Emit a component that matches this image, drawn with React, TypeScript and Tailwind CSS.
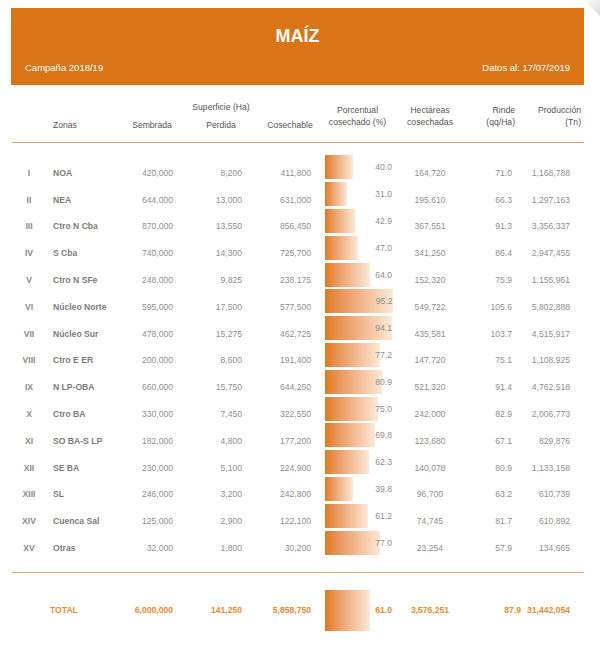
const filas = [
  ["I", "NOA", "420,000", "8,200", "411,800", 40.0, "164,720", "71.0", "1,168,788"],
  ["II", "NEA", "644,000", "13,000", "631,000", 31.0, "195,610", "66.3", "1,297,163"],
  ["III", "Ctro N Cba", "870,000", "13,550", "856,450", 42.9, "367,551", "91.3", "3,356,337"],
  ["IV", "S Cba", "740,000", "14,300", "725,700", 47.0, "341,250", "86.4", "2,947,455"],
  ["V", "Ctro N SFe", "248,000", "9,825", "238,175", 64.0, "152,320", "75.9", "1,155,961"],
  ["VI", "Núcleo Norte", "595,000", "17,500", "577,500", 95.2, "549,722", "105.6", "5,802,888"],
  ["VII", "Núcleo Sur", "478,000", "15,275", "462,725", 94.1, "435,581", "103.7", "4,515,917"],
  ["VIII", "Ctro E ER", "200,000", "8,600", "191,400", 77.2, "147,720", "75.1", "1,108,925"],
  ["IX", "N LP-OBA", "660,000", "15,750", "644,250", 80.9, "521,320", "91.4", "4,762,518"],
  ["X", "Ctro BA", "330,000", "7,450", "322,550", 75.0, "242,000", "82.9", "2,006,773"],
  ["XI", "SO BA-S LP", "182,000", "4,800", "177,200", 69.8, "123,680", "67.1", "829,876"],
  ["XII", "SE BA", "230,000", "5,100", "224,900", 62.3, "140,078", "80.9", "1,133,158"],
  ["XIII", "SL", "246,000", "3,200", "242,800", 39.8, "96,700", "63.2", "610,739"],
  ["XIV", "Cuenca Sal", "125,000", "2,900", "122,100", 61.2, "74,745", "81.7", "610,892"],
  ["XV", "Otras", "32,000", "1,800", "30,200", 77.0, "23,254", "57.9", "134,665"],
] as const;

const columnas = "grid grid-cols-[34px_72px_55px_69px_69px_84px_70px_47px_58px]";

function Barra({ pct, alto }: { pct: number; alto: string }) {
  return (
    <div
      className={`${alto} bg-linear-to-r from-[#e07a1c] to-[#fbe9d8]`}
      style={{ width: `${pct * 0.71}px` }}
    />
  );
}

export default function App() {
  return (
    <div className="relative h-[646px] w-[600px] bg-white pt-[8px] font-['Liberation_Sans',Arial,sans-serif] overflow-hidden">
      <div className="ml-[11px] h-[77px] w-[573px] bg-[#db7416] pt-[18px] text-white">
        <h1 className="text-center text-[18px] font-bold leading-[20px]">MAÍZ</h1>
        <div className="mt-[16px] flex justify-between px-[14px] text-[9.5px] leading-[12px]">
          <span>Campaña 2018/19</span>
          <span>Datos al: 17/07/2019</span>
        </div>
      </div>

      <div className="ml-[12px] w-[572px]">
        {/* encabezado */}
        <div className="mt-[15px] grid grid-cols-[34px_72px_68px_70px_68px_67px_78px_46px_66px] items-start text-[8.6px] leading-[12px] text-[#555]">
          <div />
          <div className="pl-[7px] pt-[19px]">Zonas</div>
          <div className="pt-[19px] text-center">Sembrada</div>
          <div className="pt-[1px] text-center">
            <div className="whitespace-nowrap">Superficie (Ha)</div>
            <div className="mt-[6px]">Perdida</div>
          </div>
          <div className="pt-[19px] text-center">Cosechable</div>
          <div className="pt-[4px] text-center whitespace-nowrap">
            <div>Porcentual</div>
            <div>cosechado (%)</div>
          </div>
          <div className="pt-[4px] text-center">
            <div>Hectáreas</div>
            <div>cosechadas</div>
          </div>
          <div className="pt-[4px] text-right">
            <div>Rinde</div>
            <div>(qq/Ha)</div>
          </div>
          <div className="pt-[4px] text-right">
            <div>Producción</div>
            <div>(Tn)</div>
          </div>
        </div>

        <div className="mt-[11px] h-px bg-[#e7a267]" />

        {/* filas */}
        <div className="mt-[11px] text-[8.6px] leading-[10px] text-[#8f8f8f]">
          {filas.map((f) => (
            <div key={f[0]} className={`${columnas} h-[26.8px] items-center`}>
              <div className="pt-[11px] text-center font-bold text-[#8a8a8a]">{f[0]}</div>
              <div className="pl-[7px] pt-[11px] font-bold text-[#7c7c7c] whitespace-nowrap">{f[1]}</div>
              <div className="pt-[11px] text-right">{f[2]}</div>
              <div className="pt-[11px] text-right">{f[3]}</div>
              <div className="pt-[11px] text-right">{f[4]}</div>
              <div className="grid items-center pl-[14px] pr-[3px]">
                <div className="col-start-1 row-start-1 justify-self-start">
                  <Barra pct={f[5]} alto="h-[24px]" />
                </div>
                <span className="col-start-1 row-start-1 justify-self-end">{f[5].toFixed(1)}</span>
              </div>
              <div className="pt-[11px] text-center">{f[6]}</div>
              <div className="pt-[11px] text-right">{f[7]}</div>
              <div className="pt-[11px] text-right">{f[8]}</div>
            </div>
          ))}
        </div>

        <div className="mt-[16px] h-px bg-[#e7a267]" />

        {/* total */}
        <div className={`${columnas} mt-[17px] h-[41px] items-center text-[8.6px] font-bold leading-[10px] text-[#e38a35]`}>
          <div />
          <div className="pl-[4px]">TOTAL</div>
          <div className="text-right">6,000,000</div>
          <div className="text-right">141,250</div>
          <div className="text-right">5,858,750</div>
          <div className="flex items-center justify-between pl-[14px] pr-[3px]">
            <Barra pct={63} alto="h-[41px]" />
            <span>61.0</span>
          </div>
          <div className="text-center">3,576,251</div>
          <div className="-mr-[9px] text-right">87.9</div>
          <div className="text-right">31,442,054</div>
        </div>
      </div>

      {/* esquina doblada */}
      <svg className="absolute right-0 top-0" width="18" height="18" viewBox="0 0 18 18">
        <defs>
          <linearGradient id="curl" x1="0" y1="0" x2="1" y2="1">
            <stop offset="0" stopColor="#ffffff" />
            <stop offset="1" stopColor="#d9d9d9" />
          </linearGradient>
        </defs>
        <polygon points="2,0 18,0 18,16" fill="url(#curl)" />
      </svg>
    </div>
  );
}
